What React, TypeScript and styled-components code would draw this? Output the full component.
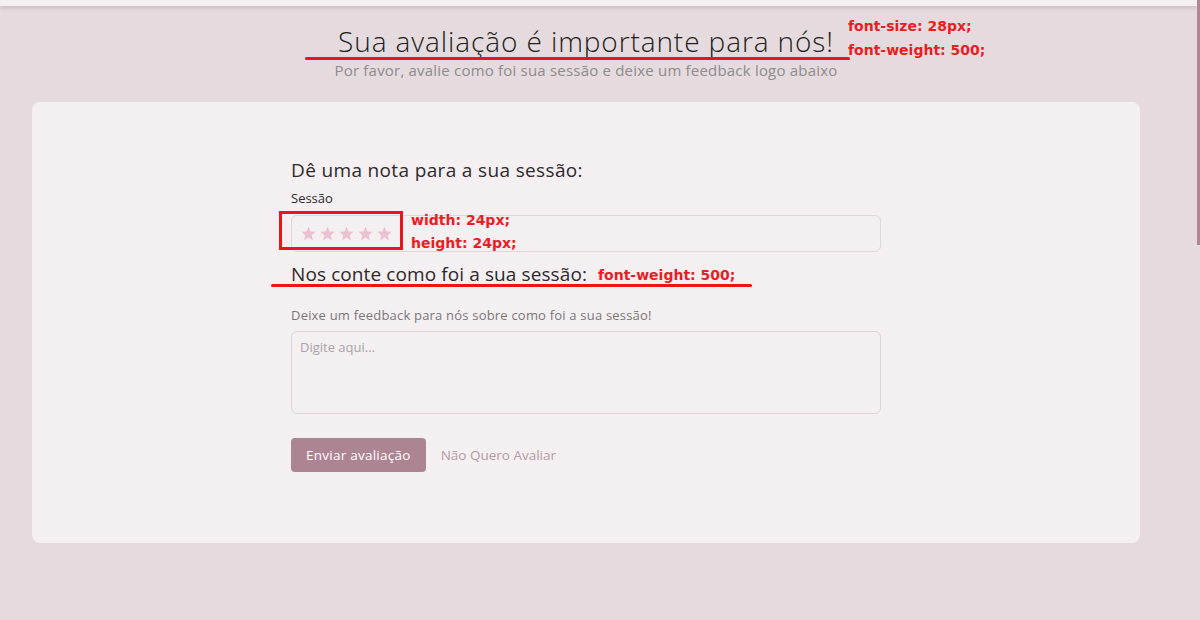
import styled, { createGlobalStyle } from "styled-components";

const GlobalStyle = createGlobalStyle`
  html, body {
    margin: 0;
    padding: 0;
    background: #e5dbdf;
    font-family: "Open Sans", "Noto Sans", sans-serif;
    overflow: hidden;
  }
`;

const Page = styled.div`
  position: relative;
  width: 1200px;
  height: 620px;
  background: #e5dbdf;
`;

const TopBar = styled.div`
  height: 6px;
  width: 1197px;
  background: #f4f0f1;
  box-shadow: 0 2px 4px rgba(120, 90, 100, 0.25);
`;

const ScrollThumb = styled.div`
  position: absolute;
  top: 0;
  right: 0;
  width: 3px;
  height: 245px;
  background: #b08596;
`;

const Main = styled.main`
  width: 1172px;
  box-sizing: border-box;
  padding: 0 32px;
`;

const Header = styled.header`
  display: flex;
  flex-direction: column;
  align-items: center;
  padding-top: 18px;
  height: 96px;
  box-sizing: border-box;
`;

const Title = styled.h1`
  margin: 0;
  font-size: 28px;
  font-weight: 300;
  letter-spacing: 0.9px;
  line-height: 34px;
  color: #221e20;
`;

const Subtitle = styled.p`
  margin: 3px 0 0;
  font-size: 15px;
  letter-spacing: 0.2px;
  line-height: 18px;
  color: #8f8a8c;
`;

const Card = styled.section`
  background: #f4eff1;
  border-radius: 8px;
  padding: 56px 0 71px;
  display: flex;
  justify-content: center;
`;

const Form = styled.form`
  width: 590px;
  display: flex;
  flex-direction: column;
`;

const SectionTitle = styled.h2<{ $space?: number; $tracking?: number }>`
  margin: ${({ $space }) => $space ?? 0}px 0 0;
  font-size: 19px;
  font-weight: 400;
  letter-spacing: ${({ $tracking }) => $tracking ?? 0.35}px;
  line-height: 24px;
  color: #2e292b;
`;

const Label = styled.label`
  margin-top: 8px;
  font-size: 13px;
  line-height: 16px;
  color: #2e292b;
`;

const RatingBox = styled.div`
  margin-top: 9px;
  height: 37px;
  box-sizing: border-box;
  border: 1px solid #e2d4da;
  border-radius: 6px;
  display: flex;
  align-items: center;
  gap: 2px;
  padding-left: 8px;
`;

const Hint = styled.p`
  margin: 21px 0 0;
  font-size: 13px;
  letter-spacing: 0.2px;
  line-height: 16px;
  color: #7d7679;
`;

const TextArea = styled.textarea`
  margin-top: 8px;
  height: 83px;
  box-sizing: border-box;
  border: 1px solid #e0d2d8;
  border-radius: 6px;
  background: transparent;
  resize: none;
  padding: 6px 8px;
  font-family: inherit;
  font-size: 13px;
  color: #333;
  outline: none;

  &::placeholder {
    color: #aaa3a6;
  }
`;

const Actions = styled.div`
  margin-top: 24px;
  display: flex;
  align-items: center;
  gap: 15px;
`;

const SubmitButton = styled.button`
  height: 34px;
  padding: 0 15px;
  border: none;
  border-radius: 4px;
  background: #ad8492;
  color: #fff;
  font-family: inherit;
  font-size: 13.5px;
  letter-spacing: 0.25px;
`;

const SkipLink = styled.a`
  font-size: 13.5px;
  color: #b39ba5;
  text-decoration: none;
`;

/* red review marks lying over the page */
const Note = styled.span<{ $x: number; $y: number }>`
  position: absolute;
  left: ${({ $x }) => $x}px;
  top: ${({ $y }) => $y}px;
  font-family: "DejaVu Sans", sans-serif;
  font-weight: 700;
  font-size: 14px;
  line-height: 16px;
  color: #ea1c24;
  white-space: nowrap;
`;

const Underline = styled.div<{ $x: number; $y: number; $w: number }>`
  position: absolute;
  left: ${({ $x }) => $x}px;
  top: ${({ $y }) => $y}px;
  width: ${({ $w }) => $w}px;
  height: 3px;
  border-radius: 2px;
  background: #e8151f;
`;

const MarkBox = styled.div`
  position: absolute;
  left: 279px;
  top: 211px;
  width: 124px;
  height: 39px;
  box-sizing: border-box;
  border: 3px solid #e8151f;
`;

function Star() {
  return (
    <svg width="17" height="17" viewBox="0 0 24 24">
      <path
        fill="#e9c1d2"
        d="M12 2.5l2.8 6.6 7.2.6-5.5 4.7 1.7 7-6.2-3.8-6.2 3.8 1.7-7L2 9.7l7.2-.6z"
      />
    </svg>
  );
}

export default function App() {
  return (
    <Page>
      <GlobalStyle />
      <TopBar />
      <ScrollThumb />
      <Main>
        <Header>
          <Title>Sua avaliação é importante para nós!</Title>
          <Subtitle>Por favor, avalie como foi sua sessão e deixe um feedback logo abaixo</Subtitle>
        </Header>
        <Card>
          <Form onSubmit={e => e.preventDefault()}>
            <SectionTitle>Dê uma nota para a sua sessão:</SectionTitle>
            <Label>Sessão</Label>
            <RatingBox>
              {[1, 2, 3, 4, 5].map(n => <Star key={n} />)}
            </RatingBox>
            <SectionTitle $space={10} $tracking={0.1}>Nos conte como foi a sua sessão:</SectionTitle>
            <Hint>Deixe um feedback para nós sobre como foi a sua sessão!</Hint>
            <TextArea placeholder="Digite aqui..." />
            <Actions>
              <SubmitButton type="submit">Enviar avaliação</SubmitButton>
              <SkipLink href="#">Não Quero Avaliar</SkipLink>
            </Actions>
          </Form>
        </Card>
      </Main>

      <Underline $x={305} $y={57} $w={545} />
      <Note $x={848} $y={18}>font-size: 28px;</Note>
      <Note $x={848} $y={42}>font-weight: 500;</Note>
      <MarkBox />
      <Note $x={411} $y={212}>width: 24px;</Note>
      <Note $x={411} $y={235}>height: 24px;</Note>
      <Note $x={598} $y={267}>font-weight: 500;</Note>
      <Underline $x={271} $y={284} $w={481} />
    </Page>
  );
}
